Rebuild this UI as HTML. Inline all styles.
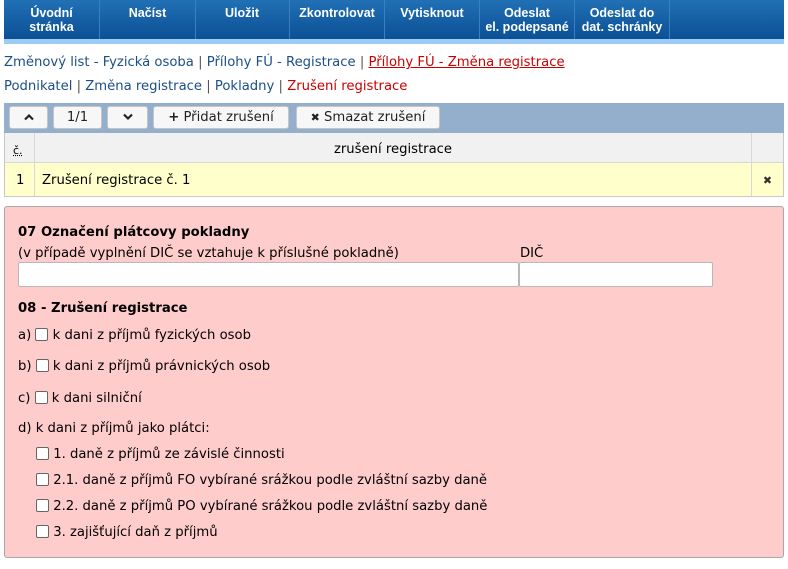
<!DOCTYPE html>
<html><head><meta charset="utf-8"><style>
*{margin:0;padding:0;box-sizing:border-box}
body{width:788px;height:569px;background:#fff;font-family:"DejaVu Sans",Verdana,sans-serif;font-size:13.2px;color:#000;position:relative;overflow:hidden}
.a{position:absolute;white-space:nowrap}
#nav{left:4px;top:0;width:780px;height:40px;background:linear-gradient(#2170b5,#0b4f94)}
#band{left:4px;top:39px;width:780px;height:5px;background:#9ccbf6}
.ni{position:absolute;top:0;height:40px;width:96px;border-right:1px solid #3a80c0;color:#fff;font-family:"Liberation Sans",Arial,sans-serif;font-weight:bold;font-size:12.5px;text-align:center;line-height:14px;display:flex;align-items:flex-start;justify-content:center;padding-top:6px}
.lk{color:#1b4f86}
.lk .s{color:#555}
.lk .r{color:#c00}
#tb{left:4px;top:103px;width:780px;height:30px;background:#93afcb}
.bt{position:absolute;top:3px;height:23px;background:#f7f7f7;border:1px solid #c5c5c5;border-radius:3px;text-align:center;line-height:22px;color:#222}
.bt svg{vertical-align:middle}
#tbl{left:4px;top:133px;width:780px;height:64px;border:1px solid #c8c8c8;border-top:none}
.c{position:absolute;border-right:1px solid #d8d8d8}
#pk{left:4px;top:206px;width:780px;height:352px;background:#ffcccc;border:1px solid #a8a8a8;border-radius:3px}
.cb{display:inline-block;width:13px;height:13px;border:1px solid #666;border-radius:2px;background:#fff;vertical-align:-2px}
.in{position:absolute;top:262px;height:25px;background:#fff;border:1px solid #b8b8b8;border-radius:2px}
</style></head><body>
<div class="a" id="nav">
<div class="ni" style="left:0">Úvodní<br>stránka</div>
<div class="ni" style="left:96px">Načíst</div>
<div class="ni" style="left:191px;width:95px">Uložit</div>
<div class="ni" style="left:286px;width:95px">Zkontrolovat</div>
<div class="ni" style="left:381px;width:95px">Vytisknout</div>
<div class="ni" style="left:476px;width:95px">Odeslat<br>el. podepsané</div>
<div class="ni" style="left:571px;width:95px">Odeslat do<br>dat. schránky</div>
</div>
<div class="a" id="band"></div>
<div class="a lk" style="left:4px;top:55px">Změnový list - Fyzická osoba <span class="s">|</span> Přílohy FÚ - Registrace <span class="s">|</span> <span class="r" style="text-decoration:underline">Přílohy FÚ - Změna registrace</span></div>
<div class="a lk" style="left:4px;top:79px">Podnikatel <span class="s">|</span> Změna registrace <span class="s">|</span> Pokladny <span class="s">|</span> <span class="r">Zrušení registrace</span></div>
<div class="a" id="tb">
<div class="bt" style="left:5px;width:39px"><svg width="12" height="8" viewBox="0 0 12 8"><path d="M2 6.5L6 2.5L10 6.5" stroke="#222" stroke-width="2.2" fill="none"/></svg></div>
<div class="bt" style="left:49px;width:49px">1/1</div>
<div class="bt" style="left:103px;width:41px"><svg width="12" height="8" viewBox="0 0 12 8"><path d="M2 1.5L6 5.5L10 1.5" stroke="#222" stroke-width="2.2" fill="none"/></svg></div>
<div class="bt" style="left:149px;width:136px"><b>+</b> Přidat zrušení</div>
<div class="bt" style="left:292px;width:144px"><b style="font-size:11px">✖</b> Smazat zrušení</div>
</div>
<div class="a" id="tbl">
<div class="c" style="left:0;top:0;width:30px;height:30px;background:#f1f1f1;border-bottom:1px solid #d8d8d8;font-size:11px;padding:11px 0 0 8px;text-decoration:underline dotted">č.</div>
<div class="c" style="left:30px;top:0;width:717px;height:30px;background:#f1f1f1;border-bottom:1px solid #d8d8d8;text-align:center;line-height:33px">zrušení registrace</div>
<div class="c" style="left:747px;top:0;width:31px;height:30px;background:#f1f1f1;border-bottom:1px solid #d8d8d8;border-right:none"></div>
<div class="c" style="left:0;top:30px;width:30px;height:33px;background:#ffffcc;line-height:36px;padding-left:11px">1</div>
<div class="c" style="left:30px;top:30px;width:717px;height:33px;background:#ffffcc;line-height:36px;padding-left:7px">Zrušení registrace č. 1</div>
<div class="c" style="left:747px;top:30px;width:31px;height:33px;background:#ffffcc;line-height:36px;text-align:center;border-right:none;font-size:11px;color:#333">✖</div>
</div>
<div class="a" id="pk"></div>
<div class="a" style="left:18px;top:225px;font-weight:bold">07 Označení plátcovy pokladny</div>
<div class="a" style="left:18px;top:246px">(v případě vyplnění DIČ se vztahuje k příslušné pokladně)</div>
<div class="a" style="left:520px;top:246px">DIČ</div>
<div class="in" style="left:18px;width:501px"></div>
<div class="in" style="left:519px;width:194px"></div>
<div class="a" style="left:18px;top:301px;font-weight:bold">08 - Zrušení registrace</div>
<div class="a" style="left:18px;top:328px">a) <span class="cb"></span> k dani z příjmů fyzických osob</div>
<div class="a" style="left:18px;top:359px">b) <span class="cb"></span> k dani z příjmů právnických osob</div>
<div class="a" style="left:18px;top:391px">c) <span class="cb"></span> k dani silniční</div>
<div class="a" style="left:18px;top:421px">d) k dani z příjmů jako plátci:</div>
<div class="a" style="left:36px;top:447px"><span class="cb"></span> 1. daně z příjmů ze závislé činnosti</div>
<div class="a" style="left:36px;top:473px"><span class="cb"></span> 2.1. daně z příjmů FO vybírané srážkou podle zvláštní sazby daně</div>
<div class="a" style="left:36px;top:499px"><span class="cb"></span> 2.2. daně z příjmů PO vybírané srážkou podle zvláštní sazby daně</div>
<div class="a" style="left:36px;top:525px"><span class="cb"></span> 3. zajišťující daň z příjmů</div>
</body></html>
